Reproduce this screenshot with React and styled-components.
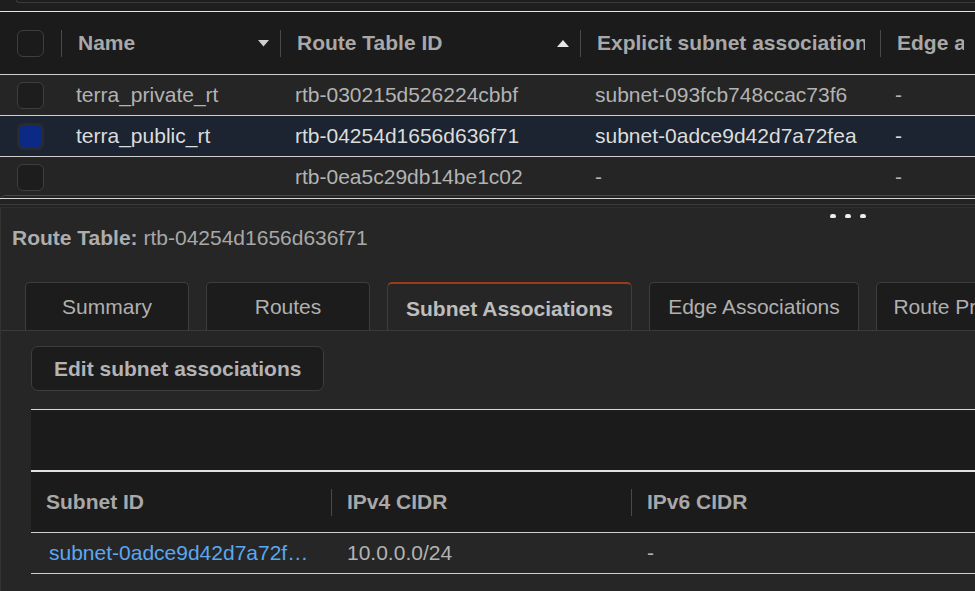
import React from "react";
import styled, { createGlobalStyle } from "styled-components";

const GlobalStyle = createGlobalStyle`
  html, body {
    margin: 0;
    padding: 0;
    background: #262626;
  }
  body {
    font-family: "Liberation Sans", Arial, sans-serif;
    font-size: 21px;
    overflow: hidden;
  }
`;

const routeTables = [
  { name: "terra_private_rt", id: "rtb-030215d526224cbbf", subnet: "subnet-093fcb748ccac73f6", edge: "-" },
  { name: "terra_public_rt", id: "rtb-04254d1656d636f71", subnet: "subnet-0adce9d42d7a72fea", edge: "-", selected: true },
  { name: "", id: "rtb-0ea5c29db14be1c02", subnet: "-", edge: "-" },
];

const tabs = [
  { label: "Summary", width: 164 },
  { label: "Routes", width: 164 },
  { label: "Subnet Associations", width: 245, active: true },
  { label: "Edge Associations", width: 210 },
  { label: "Route Propagation", width: 210 },
];

function SortDown() {
  return (
    <svg width="11" height="7" viewBox="0 0 11 7">
      <path d="M0 0 L11 0 L5.5 6.5 Z" fill="#d0d0d0" />
    </svg>
  );
}

function SortUp() {
  return (
    <svg width="12" height="7" viewBox="0 0 12 7">
      <path d="M6 0 L12 7 L0 7 Z" fill="#e6e6e6" />
    </svg>
  );
}

export default function App() {
  return (
    <>
      <GlobalStyle />
      <Page>
        <TopStrip>
          <UpperFrame />
        </TopStrip>

        <RouteGrid>
          <HeadRow>
            <CheckCell>
              <Checkbox />
            </CheckCell>
            <HeadCell>
              <HeadText>Name</HeadText>
              <SortDown />
            </HeadCell>
            <HeadCell>
              <HeadText>Route Table ID</HeadText>
              <SortUp />
            </HeadCell>
            <HeadCell $wide>
              <HeadText>Explicit subnet associations</HeadText>
            </HeadCell>
            <HeadCell>
              <HeadText>Edge associations</HeadText>
            </HeadCell>
          </HeadRow>
          {routeTables.map((rt) => (
            <BodyRow key={rt.id} $selected={rt.selected}>
              <CheckCell>
                <Checkbox $checked={rt.selected} $filled />
              </CheckCell>
              <Cell>{rt.name}</Cell>
              <Cell>{rt.id}</Cell>
              <Cell>{rt.subnet}</Cell>
              <Cell>{rt.edge}</Cell>
            </BodyRow>
          ))}
        </RouteGrid>

        <Splitter>
          <SplitLine $color="#d6d6d6" />
          <SplitLine $color="#3c3c3c" $gap={5} />
          <SplitLine $color="#303030" $gap={2} />
        </Splitter>

        <Panel>
          <Handle>
            <Dot />
            <Dot />
            <Dot />
          </Handle>

          <Title>
            <strong>Route Table:</strong> rtb-04254d1656d636f71
          </Title>

          <TabBar>
            {tabs.map((t) => (
              <Tab key={t.label} $active={t.active} $width={t.width}>
                {t.label}
              </Tab>
            ))}
          </TabBar>

          <Content>
            <Button>Edit subnet associations</Button>

            <SubnetTable>
              <FilterBand />
              <SubHeadRow>
                <SubHeadCell>Subnet ID</SubHeadCell>
                <SubHeadCell $sep>IPv4 CIDR</SubHeadCell>
                <SubHeadCell $sep>IPv6 CIDR</SubHeadCell>
              </SubHeadRow>
              <SubRow>
                <SubCell $first>
                  <Link>subnet-0adce9d42d7a72fea</Link>
                </SubCell>
                <SubCell>10.0.0.0/24</SubCell>
                <SubCell>-</SubCell>
              </SubRow>
            </SubnetTable>
          </Content>
        </Panel>
      </Page>
    </>
  );
}

const Page = styled.div`
  width: 975px;
  height: 591px;
  overflow: hidden;
  display: flex;
  flex-direction: column;
  background: #262626;
`;

const TopStrip = styled.div`
  height: 11px;
  background: #1e1e1e;
  flex-shrink: 0;
`;

const UpperFrame = styled.div`
  height: 2px;
  margin-left: 16px;
  border: 1px solid #3a3a3a;
  border-top: none;
  border-right: none;
  border-bottom-left-radius: 8px;
`;

const RouteGrid = styled.div`
  height: 183px;
  flex-shrink: 0;
  overflow: hidden;
  border-top: 1px solid #e4e4e4;
  background: #252525;
`;

const columns = "61px 219px 300px 300px 1fr";

const HeadRow = styled.div`
  display: grid;
  grid-template-columns: ${columns};
  height: 62px;
  background: #1b1b1b;
  border-bottom: 1px solid #cfcfcf;
`;

const BodyRow = styled.div`
  display: grid;
  grid-template-columns: ${columns};
  height: 40px;
  background: ${(p) => (p.$selected ? "#1b2430" : "#252525")};
  color: ${(p) => (p.$selected ? "#dcdcdc" : "#b3b3b3")};
  border-bottom: 1px solid #cfcfcf;
`;

const CheckCell = styled.div`
  display: flex;
  align-items: center;
  padding-left: 17px;
`;

const Checkbox = styled.div`
  width: 27px;
  height: 27px;
  box-sizing: border-box;
  border-radius: 6px;
  border: ${(p) => (p.$checked ? "3px solid #2b2b2b" : "1px solid #3e3e3e")};
  background: ${(p) => (p.$checked ? "#0b2a86" : p.$filled ? "#1d1d1d" : "transparent")};
`;

const HeadCell = styled.div`
  position: relative;
  display: flex;
  align-items: center;
  justify-content: space-between;
  padding: 0 ${(p) => (p.$wide ? "15px" : "11px")} 0 17px;
  min-width: 0;
  color: #a8a8a8;
  font-weight: bold;

  &::before {
    content: "";
    position: absolute;
    left: 0;
    top: 18px;
    height: 27px;
    width: 1px;
    background: #4a4a4a;
  }
`;

const HeadText = styled.span`
  white-space: nowrap;
  overflow: hidden;
  min-width: 0;
`;

const Cell = styled.div`
  display: flex;
  align-items: center;
  padding-left: 15px;
  white-space: nowrap;
  overflow: hidden;
`;

const Splitter = styled.div`
  height: 13px;
  flex-shrink: 0;
  background: #232323;
  border-top: 1px solid #4a4a4a;
  border-top-left-radius: 6px;
  padding-top: 2px;
  box-sizing: border-box;
`;

const SplitLine = styled.div`
  height: 1px;
  margin-top: ${(p) => p.$gap || 0}px;
  background: ${(p) => p.$color};
`;

const Panel = styled.div`
  position: relative;
  flex: 1;
  background: #262626;
  border-left: 1px solid #333;
`;

const Handle = styled.div`
  position: absolute;
  top: 6px;
  left: 829px;
  display: flex;
  gap: 9px;
`;

const Dot = styled.span`
  width: 6px;
  height: 4px;
  border-radius: 3px 3px 2px 2px;
  background: #eeeeee;
`;

const Title = styled.div`
  padding: 18px 0 0 11px;
  height: 24px;
  line-height: 24px;
  color: #a8a8a8;

  strong {
    color: #adadad;
  }
`;

const TabBar = styled.div`
  display: flex;
  gap: 17px;
  margin-top: 32px;
  padding-left: 24px;
  height: 48px;
  border-bottom: 1px solid #3a3a3a;
  overflow: hidden;
`;

const Tab = styled.div`
  flex-shrink: 0;
  width: ${(p) => p.$width}px;
  box-sizing: border-box;
  display: flex;
  align-items: center;
  justify-content: center;
  white-space: nowrap;
  border: 1px solid #3d3d3d;
  border-bottom: none;
  border-radius: 5px 5px 0 0;
  background: ${(p) => (p.$active ? "#262626" : "#1c1c1c")};
  border-top: ${(p) => (p.$active ? "2px solid #9b3b1b" : "1px solid #3d3d3d")};
  color: ${(p) => (p.$active ? "#bdbdbd" : "#b0b0b0")};
  font-weight: ${(p) => (p.$active ? "bold" : "normal")};
  padding-top: ${(p) => (p.$active ? "2px" : "0")};
  height: ${(p) => (p.$active ? "49px" : "48px")};
`;

const Content = styled.div`
  padding: 15px 0 0 30px;
`;

const Button = styled.button`
  height: 45px;
  padding: 0 22px;
  border: 1px solid #3d3d3d;
  border-radius: 7px;
  background: #1c1c1c;
  color: #b3b3b3;
  font-family: inherit;
  font-size: 21px;
  font-weight: bold;
`;

const SubnetTable = styled.div`
  margin-top: 18px;
  border-top: 1px solid #d8d8d8;
`;

const FilterBand = styled.div`
  height: 60px;
  background: #1b1b1b;
  border-bottom: 2px solid #e2e2e2;
`;

const subColumns = "300px 300px 1fr";

const SubHeadRow = styled.div`
  display: grid;
  grid-template-columns: ${subColumns};
  height: 60px;
  background: #1b1b1b;
  border-bottom: 1px solid #cfcfcf;
`;

const SubHeadCell = styled.div`
  position: relative;
  display: flex;
  align-items: center;
  padding-left: ${(p) => (p.$sep ? "16px" : "15px")};
  color: #a8a8a8;
  font-weight: bold;

  &::before {
    content: "";
    display: ${(p) => (p.$sep ? "block" : "none")};
    position: absolute;
    left: 0;
    top: 17px;
    height: 27px;
    width: 1px;
    background: #4a4a4a;
  }
`;

const SubRow = styled.div`
  display: grid;
  grid-template-columns: ${subColumns};
  height: 40px;
  border-bottom: 1px solid #cfcfcf;
  color: #b3b3b3;
`;

const SubCell = styled.div`
  display: flex;
  align-items: center;
  min-width: 0;
  padding: 0 21px 0 ${(p) => (p.$first ? "18px" : "16px")};
`;

const Link = styled.span`
  color: #5aa8f2;
  white-space: nowrap;
  overflow: hidden;
  text-overflow: ellipsis;
`;
